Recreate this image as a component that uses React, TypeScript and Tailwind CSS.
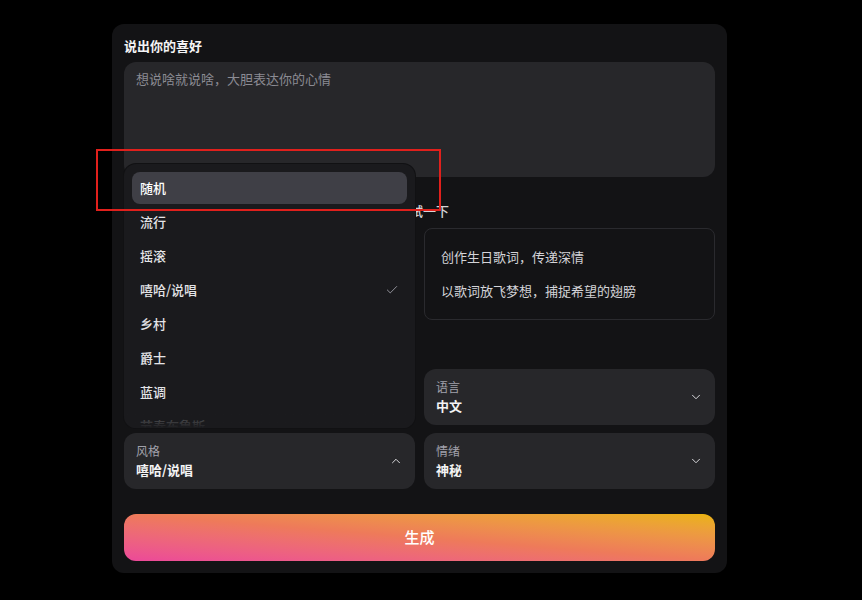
import { Check, ChevronDown, ChevronUp } from 'lucide-react';

const FONT = '[font-family:"Noto_Sans_CJK_SC","Noto_Sans",sans-serif]';

const STYLES = ['随机', '流行', '摇滚', '嘻哈/说唱', '乡村', '爵士', '蓝调', '节奏布鲁斯'];
const IDEAS = ['创作生日歌词，传递深情', '以歌词放飞梦想，捕捉希望的翅膀'];

function SelectBox({ label, value, open }: { label: string; value: string; open?: boolean }) {
  return (
    <div className="h-[56px] rounded-xl bg-[#27272a] px-3 flex items-center justify-between">
      <div className="flex flex-col">
        <span className="text-[12px] leading-[16px] text-[#a1a1aa]">{label}</span>
        <span className="text-[13px] leading-[21px] font-bold text-[#f4f4f5]">{value}</span>
      </div>
      {open ? (
        <ChevronUp size={14} strokeWidth={1.6} className="text-[#e4e4e7]" />
      ) : (
        <ChevronDown size={14} strokeWidth={1.6} className="text-[#e4e4e7]" />
      )}
    </div>
  );
}

function StyleMenu({ selected }: { selected: string }) {
  return (
    <div className="absolute left-0 right-0 bottom-[61px] h-[264px] rounded-xl bg-[#1a1a1d] ring-1 ring-[#111113] overflow-hidden p-2 z-10">
      {STYLES.map((s, i) => (
        <div
          key={s}
          className={`h-[32px] mb-[2px] rounded-lg px-2 flex items-center justify-between text-[13px] font-medium ${
            i === 0 ? 'bg-[#3f3f46] text-white' : 'text-[#e4e4e7]'
          }`}
        >
          <span>{s}</span>
          {s === selected && <Check size={14} strokeWidth={1.5} className="text-[#a1a1aa]" />}
        </div>
      ))}
      {/* list keeps scrolling below, fade out the cut row */}
      <div className="absolute left-0 right-0 bottom-0 h-[22px] bg-gradient-to-b from-[#1a1a1d]/40 to-[#1a1a1d]" />
    </div>
  );
}

export default function App() {
  return (
    <div className={`relative min-h-[600px] bg-black pt-[24px] ${FONT}`}>
      <div className="ml-[112px] w-[615px] rounded-xl bg-[#131315] px-3 pt-[14px] pb-3">
        <div className="text-[13px] leading-[16px] font-bold text-[#f4f4f5]">说出你的喜好</div>
        <div className="mt-2 h-[115px] rounded-xl bg-[#27272a] px-3 py-[7px] text-[13px] text-[#8b8b93]">
          想说啥就说啥，大胆表达你的心情
        </div>

        <div className="mt-[26px] text-[13px] leading-[16px] font-medium text-[#d4d4d8] whitespace-nowrap">
          不知道写什么？点击右侧灵感示例，快速填入描述试一下
        </div>
        <div className="mt-[9px] grid grid-cols-2 gap-[9px]">
          <div />
          <div className="h-[92px] rounded-lg border border-[#2a2a2e] px-4 flex flex-col justify-center gap-[14px]">
            {IDEAS.map((t) => (
              <div key={t} className="text-[13px] leading-[20px] text-[#d4d4d8]">
                {t}
              </div>
            ))}
          </div>
        </div>

        <div className="mt-[49px] grid grid-cols-2 gap-x-[9px] gap-y-[8px]">
          <SelectBox label="时长" value="短" />
          <SelectBox label="语言" value="中文" />
          <div className="relative">
            <StyleMenu selected="嘻哈/说唱" />
            <SelectBox label="风格" value="嘻哈/说唱" open />
          </div>
          <SelectBox label="情绪" value="神秘" />
        </div>

        <button className="mt-[25px] w-full h-[47px] rounded-xl bg-gradient-to-tr from-[#ec4899] via-[#ee7a5a] to-[#eab308] text-[15px] font-medium text-white">
          生成
        </button>
      </div>

      {/* highlight frame over the first menu entry */}
      <div className="absolute left-[96px] top-[149px] w-[345px] h-[62px] border-2 border-[#e0201c] pointer-events-none z-20" />
    </div>
  );
}
